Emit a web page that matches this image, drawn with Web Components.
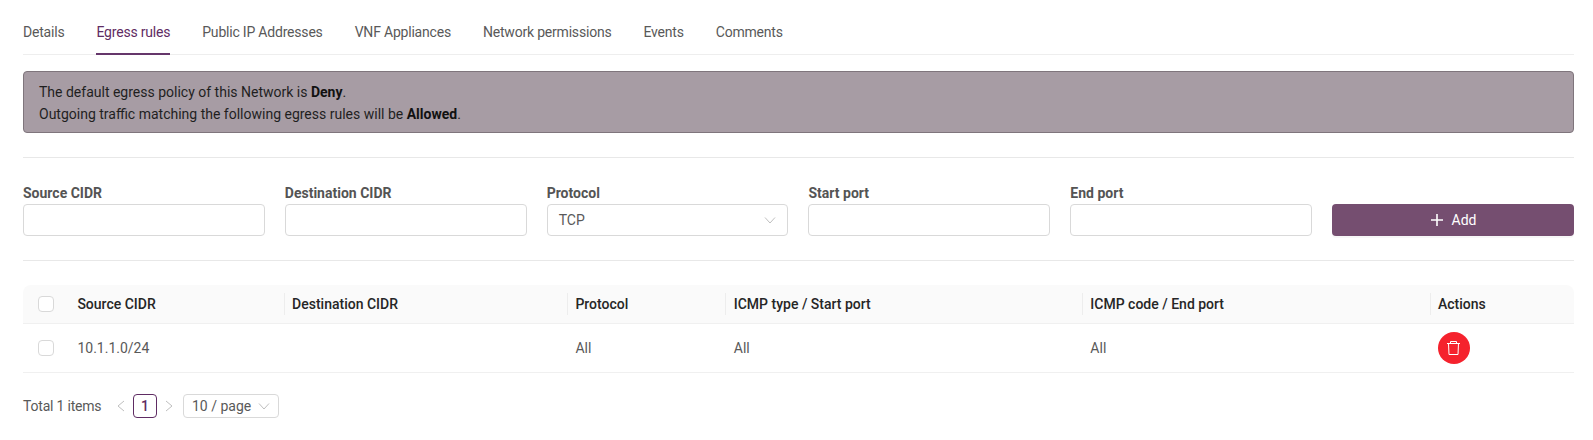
<!DOCTYPE html>
<html lang="en">
<head>
<meta charset="utf-8">
<title>Egress rules</title>
<style>
  html, body { margin: 0; background: #fff; }
  body { font-family: Roboto, "Liberation Sans", sans-serif; font-size: 14px; color: #595959; }
</style>
</head>
<body>
<egress-page></egress-page>

<script>
const CHEVRON = `<svg width="12" height="12" viewBox="0 0 12 12" fill="none" stroke="currentColor" stroke-width="1"><path d="M1 3.5 L6 9 L11 3.5"/></svg>`;

class NavTabs extends HTMLElement {
    constructor() {
        super();
        this.attachShadow({ mode: 'open' });
    }

    connectedCallback() {
        const tabs = (this.getAttribute('tabs') || '').split('|');
        const active = this.getAttribute('active');
        this.shadowRoot.innerHTML = `
      <style>
        :host{display:flex; gap:32px; height:55px; box-sizing:border-box; border-bottom:1px solid #eeeeee;}
        .tab{height:55px; box-sizing:border-box; padding-top:22px; line-height:20px; font-size:14px; color:#595959; white-space:nowrap; letter-spacing:-0.2px;}
        .tab.on{color:#5f2c63; border-bottom:2px solid #65366b;}
      </style>
      ${tabs.map(t => `<div class="tab ${t === active ? 'on' : ''}">${t}</div>`).join('')}
    `;
    }
}

class InfoAlert extends HTMLElement {
    constructor() {
        super();
        this.attachShadow({ mode: 'open' });
        this.shadowRoot.innerHTML = `
      <style>
        :host{display:block; box-sizing:border-box; height:62px; padding:9px 15px; background:#a79ca4;
          border:1px solid #7f757c; border-radius:4px; color:#1f1f1f; font-size:14px; line-height:22px;}
        ::slotted(b){font-weight:700; color:#111;}
      </style>
      <slot></slot>
    `;
    }
}

class RuleField extends HTMLElement {
    constructor() {
        super();
        this.attachShadow({ mode: 'open' });
    }

    connectedCallback() {
        const value = this.getAttribute('value');
        this.shadowRoot.innerHTML = `
      <style>
        :host{display:flex; flex-direction:column; min-width:0;}
        label{height:22px; line-height:22px; font-size:14px; font-weight:700; color:#545454;}
        .box{height:32px; box-sizing:border-box; border:1px solid #d9d9d9; border-radius:4px; background:#fff;
          display:flex; align-items:center; justify-content:space-between; padding:0 11px;
          font-size:14px; color:#595959;}
        .arrow{display:flex; color:#bfbfbf;}
      </style>
      <label>${this.getAttribute('label')}</label>
      <div class="box">
        ${value ? `<span>${value}</span><span class="arrow">${CHEVRON}</span>` : ''}
      </div>
    `;
    }
}

class AddButton extends HTMLElement {
    constructor() {
        super();
        this.attachShadow({ mode: 'open' });
        this.shadowRoot.innerHTML = `
      <style>
        :host{display:flex; align-items:center; justify-content:center; gap:8px; height:32px; box-sizing:border-box;
          background:#754e70; border-radius:4px; color:#fff; font-size:14px; box-shadow:0 2px 0 rgba(0,0,0,0.03);}
        svg{display:block;}
      </style>
      <svg width="14" height="14" viewBox="0 0 14 14" fill="none" stroke="#fff" stroke-width="1.6"><path d="M7 1 V13 M1 7 H13"/></svg>
      <slot></slot>
    `;
    }
}

class CheckMark extends HTMLElement {
    constructor() {
        super();
        this.attachShadow({ mode: 'open' });
        this.shadowRoot.innerHTML = `
      <style>
        :host{display:block; width:16px; height:16px; box-sizing:border-box; border:1px solid #d9d9d9; border-radius:4px; background:#fff;}
      </style>
    `;
    }
}

class DeleteButton extends HTMLElement {
    constructor() {
        super();
        this.attachShadow({ mode: 'open' });
        this.shadowRoot.innerHTML = `
      <style>
        :host{display:flex; align-items:center; justify-content:center; width:32px; height:32px; border-radius:50%; background:#f5222d;}
      </style>
      <svg width="13" height="14" viewBox="0 0 13 14" fill="none" stroke="#fff" stroke-width="1">
        <path d="M0 2.5 H13 M3.5 2.5 V0.5 H9.5 V2.5 M1.5 2.5 L2 13.5 H11 L11.5 2.5"/>
      </svg>
    `;
    }
}

class RulesTable extends HTMLElement {
    constructor() {
        super();
        this.attachShadow({ mode: 'open' });
        this.shadowRoot.innerHTML = `
      <style>
        :host{display:block;}
        .row{display:grid; grid-template-columns:46px 214.7px 283.3px 158.4px 356.6px 347.6px 1fr;}
        .head{height:39px; background:#fafafa; border-bottom:1px solid #f0f0f0; border-radius:8px 8px 0 0; box-sizing:border-box;}
        .body{height:49px; border-bottom:1px solid #f0f0f0; box-sizing:border-box;}
        .cell{display:flex; align-items:center; padding:0 8.4px; min-width:0; position:relative; white-space:nowrap;}
        .head .cell{font-weight:500; color:#262626;}
        .head .cell.sep::before{content:""; position:absolute; left:0; top:8px; bottom:8px; width:1px; background:#ededed;}
        .check{padding:0 0 0 15px;}
      </style>
      <div class="row head">
        <div class="cell check"><check-mark></check-mark></div>
        <div class="cell">Source CIDR</div>
        <div class="cell sep">Destination CIDR</div>
        <div class="cell sep">Protocol</div>
        <div class="cell sep">ICMP type / Start port</div>
        <div class="cell sep">ICMP code / End port</div>
        <div class="cell sep">Actions</div>
      </div>
      <div class="row body">
        <div class="cell check"><check-mark></check-mark></div>
        <div class="cell">10.1.1.0/24</div>
        <div class="cell"></div>
        <div class="cell">All</div>
        <div class="cell">All</div>
        <div class="cell">All</div>
        <div class="cell"><delete-button></delete-button></div>
      </div>
    `;
    }
}

class PagerBar extends HTMLElement {
    constructor() {
        super();
        this.attachShadow({ mode: 'open' });
        this.shadowRoot.innerHTML = `
      <style>
        :host{display:flex; align-items:center; height:24px; font-size:14px; color:#595959;}
        .total{width:90px; letter-spacing:-0.2px; white-space:nowrap;}
        .nav{display:flex; width:16px; justify-content:center; color:#bfbfbf;}
        .page{width:24px; height:24px; box-sizing:border-box; margin:0 4px; border:1px solid #5f2c63; border-radius:4px;
          display:flex; align-items:center; justify-content:center; color:#5f2c63; font-weight:500;}
        .size{width:96px; height:24px; box-sizing:border-box; margin-left:6px; padding:0 8px; border:1px solid #d9d9d9; border-radius:4px;
          display:flex; align-items:center; justify-content:space-between;}
        .size svg{color:#bfbfbf;}
      </style>
      <span class="total">Total 1 items</span>
      <span class="nav"><svg width="10" height="12" viewBox="0 0 10 12" fill="none" stroke="currentColor"><path d="M8 1 L2 6 L8 11"/></svg></span>
      <span class="page">1</span>
      <span class="nav"><svg width="10" height="12" viewBox="0 0 10 12" fill="none" stroke="currentColor"><path d="M2 1 L8 6 L2 11"/></svg></span>
      <span class="size">10 / page ${CHEVRON}</span>
    `;
    }
}

class EgressPage extends HTMLElement {
    constructor() {
        super();
        this.attachShadow({ mode: 'open' });
        this.shadowRoot.innerHTML = `
      <style>
        :host{display:block; padding:0 19px 0 23px; height:440px; box-sizing:border-box; overflow:hidden;}
        info-alert{margin-top:16px;}
        hr{border:0; border-top:1px solid #e8e8e8; margin:0;}
        .top{margin-top:24px;}
        .form{display:grid; grid-template-columns:repeat(6, 1fr); column-gap:20px; margin-top:24px; align-items:end;}
        .mid{margin-top:24px;}
        rules-table{margin-top:24px;}
        pager-bar{margin-top:21px;}
      </style>
      <nav-tabs active="Egress rules" tabs="Details|Egress rules|Public IP Addresses|VNF Appliances|Network permissions|Events|Comments"></nav-tabs>
      <info-alert>
        The default egress policy of this Network is <b>Deny</b>.<br>
        Outgoing traffic matching the following egress rules will be <b>Allowed</b>.
      </info-alert>
      <hr class="top">
      <div class="form">
        <rule-field label="Source CIDR"></rule-field>
        <rule-field label="Destination CIDR"></rule-field>
        <rule-field label="Protocol" value="TCP"></rule-field>
        <rule-field label="Start port"></rule-field>
        <rule-field label="End port"></rule-field>
        <add-button>Add</add-button>
      </div>
      <hr class="mid">
      <rules-table></rules-table>
      <pager-bar></pager-bar>
    `;
    }
}

customElements.define('nav-tabs', NavTabs);
customElements.define('info-alert', InfoAlert);
customElements.define('rule-field', RuleField);
customElements.define('add-button', AddButton);
customElements.define('check-mark', CheckMark);
customElements.define('delete-button', DeleteButton);
customElements.define('rules-table', RulesTable);
customElements.define('pager-bar', PagerBar);
customElements.define('egress-page', EgressPage);
</script>
</body>
</html>
